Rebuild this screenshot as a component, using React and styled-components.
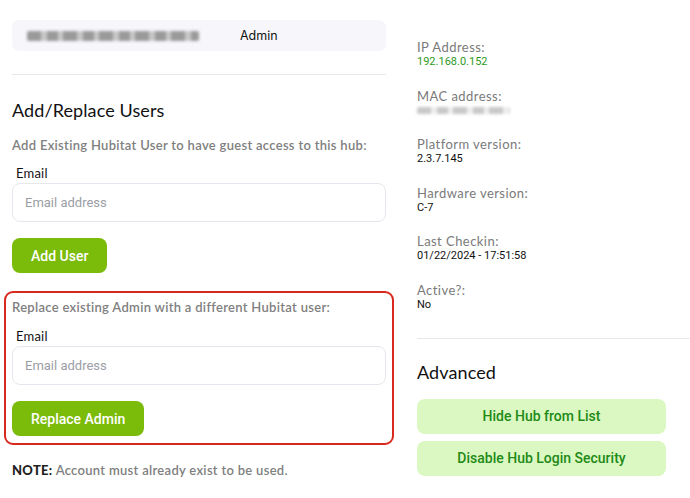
import React from "react";
import styled, { createGlobalStyle } from "styled-components";

const GlobalStyle = createGlobalStyle`
  html, body {
    margin: 0;
    padding: 0;
    background: #fff;
  }
  body {
    font-family: "Lato", "Noto Sans", sans-serif;
    color: #111;
    overflow: hidden;
  }
`;

const Page = styled.div`
  display: grid;
  grid-template-columns: 374px 1fr;
  column-gap: 31px;
  padding-left: 12px;
  width: 690px;
  box-sizing: border-box;
`;

const LeftCol = styled.div`
  display: flex;
  flex-direction: column;
  padding-top: 20px;
`;

const UserCard = styled.div`
  height: 31px;
  background: #f7f7fb;
  border-radius: 7px;
  display: flex;
  align-items: center;
  padding-left: 15px;
`;

const Blur = styled.div`
  width: ${(p) => p.w}px;
  height: ${(p) => p.h}px;
  background: repeating-linear-gradient(
    90deg,
    ${(p) => p.c} 0 14px,
    ${(p) => p.c2} 14px 20px,
    ${(p) => p.c} 20px 31px,
    ${(p) => p.c2} 31px 36px
  );
  filter: blur(1.4px);
  border-radius: 2px;
`;

const Role = styled.span`
  font-family: "Inter", "Noto Sans", sans-serif;
  font-size: 12.5px;
  margin-left: 41px;
  color: #111;
`;

const Divider = styled.div`
  height: 1px;
  background: #e8e8e8;
  margin-top: ${(p) => p.mt}px;
`;

const Heading = styled.h2`
  font-family: "Lato", sans-serif;
  font-weight: 400;
  font-size: 18px;
  line-height: 22px;
  letter-spacing: 0.1px;
  margin: ${(p) => p.mt}px 0 0;
  color: #111;
`;

const Hint = styled.div`
  font-size: 13px;
  line-height: 18px;
  font-weight: 600;
  letter-spacing: 0.3px;
  color: #808080;
  margin-top: ${(p) => p.mt}px;
`;

const Label = styled.label`
  display: block;
  font-size: 13px;
  line-height: 18px;
  letter-spacing: 0.2px;
  color: #111;
  padding-left: 4px;
  margin-top: ${(p) => p.mt}px;
`;

const Input = styled.input`
  display: block;
  box-sizing: border-box;
  width: 100%;
  height: 39px;
  margin-top: 1px;
  border: 1px solid #e6e6ee;
  border-radius: 8px;
  padding: 0 12px;
  font-family: "Roboto", sans-serif;
  font-size: 13px;
  outline: none;
  &::placeholder {
    color: #9b9ea6;
  }
`;

const PrimaryButton = styled.button`
  align-self: flex-start;
  height: 35px;
  padding: 0 19px;
  margin-top: 16px;
  border: none;
  border-radius: 8px;
  background: #7bbb0a;
  color: #fff;
  font-family: "Roboto", sans-serif;
  font-weight: 500;
  font-size: 14px;
`;

const ReplaceBox = styled.div`
  display: flex;
  flex-direction: column;
  margin: 18px -8px 0;
  padding: 5px 6px 7px;
  border: 2px solid #d9291e;
  border-radius: 9px;
`;

const Note = styled.div`
  font-size: 13px;
  line-height: 18px;
  letter-spacing: 0.3px;
  color: #808080;
  font-weight: 600;
  margin-top: 16px;
  b {
    color: #222;
    font-weight: 900;
  }
`;

const RightCol = styled.div`
  display: flex;
  flex-direction: column;
  padding-top: 39px;
`;

const InfoList = styled.div`
  display: flex;
  flex-direction: column;
  gap: 18.5px;
`;

const InfoItem = styled.div`
  display: flex;
  flex-direction: column;
`;

const InfoLabel = styled.div`
  font-size: 13px;
  line-height: 16px;
  letter-spacing: 0.45px;
  color: #7a7a7a;
`;

const InfoValue = styled.div`
  display: flex;
  align-items: center;
  height: 14px;
  font-family: "Roboto", sans-serif;
  font-size: 11px;
  line-height: 14px;
  color: ${(p) => (p.green ? "#2e9a1e" : "#111")};
`;

const SoftButton = styled.button`
  width: 249px;
  height: 35px;
  border: none;
  border-radius: 8px;
  background: #dbf8c2;
  color: #228a16;
  font-family: "Roboto", sans-serif;
  font-weight: 500;
  font-size: 14px;
  margin-top: ${(p) => p.mt}px;
`;

const info = [
  { label: "IP Address:", value: "192.168.0.152", green: true },
  { label: "MAC address:", blur: true },
  { label: "Platform version:", value: "2.3.7.145" },
  { label: "Hardware version:", value: "C-7" },
  { label: "Last Checkin:", value: "01/22/2024 - 17:51:58" },
  { label: "Active?:", value: "No" },
];

export default function App() {
  return (
    <>
      <GlobalStyle />
      <Page>
        <LeftCol>
          <UserCard>
            <Blur w={172} h={10} c="#9a9a9a" c2="#c8c8c8" />
            <Role>Admin</Role>
          </UserCard>
          <Divider mt={23} />
          <Heading mt={24}>Add/Replace Users</Heading>
          <Hint mt={15}>Add Existing Hubitat User to have guest access to this hub:</Hint>
          <Label mt={10}>Email</Label>
          <Input placeholder="Email address" />
          <PrimaryButton>Add User</PrimaryButton>
          <ReplaceBox>
            <Hint mt={0}>Replace existing Admin with a different Hubitat user:</Hint>
            <Label mt={11}>Email</Label>
            <Input placeholder="Email address" />
            <PrimaryButton>Replace Admin</PrimaryButton>
          </ReplaceBox>
          <Note>
            <b>NOTE:</b> Account must already exist to be used.
          </Note>
        </LeftCol>
        <RightCol>
          <InfoList>
            {info.map((it) => (
              <InfoItem key={it.label}>
                <InfoLabel>{it.label}</InfoLabel>
                <InfoValue green={it.green}>
                  {it.blur ? <Blur w={93} h={7} c="#c8c8c8" c2="#eeeeee" /> : it.value}
                </InfoValue>
              </InfoItem>
            ))}
          </InfoList>
          <Divider mt={26} />
          <Heading mt={22}>Advanced</Heading>
          <SoftButton mt={16}>Hide Hub from List</SoftButton>
          <SoftButton mt={7}>Disable Hub Login Security</SoftButton>
        </RightCol>
      </Page>
    </>
  );
}
